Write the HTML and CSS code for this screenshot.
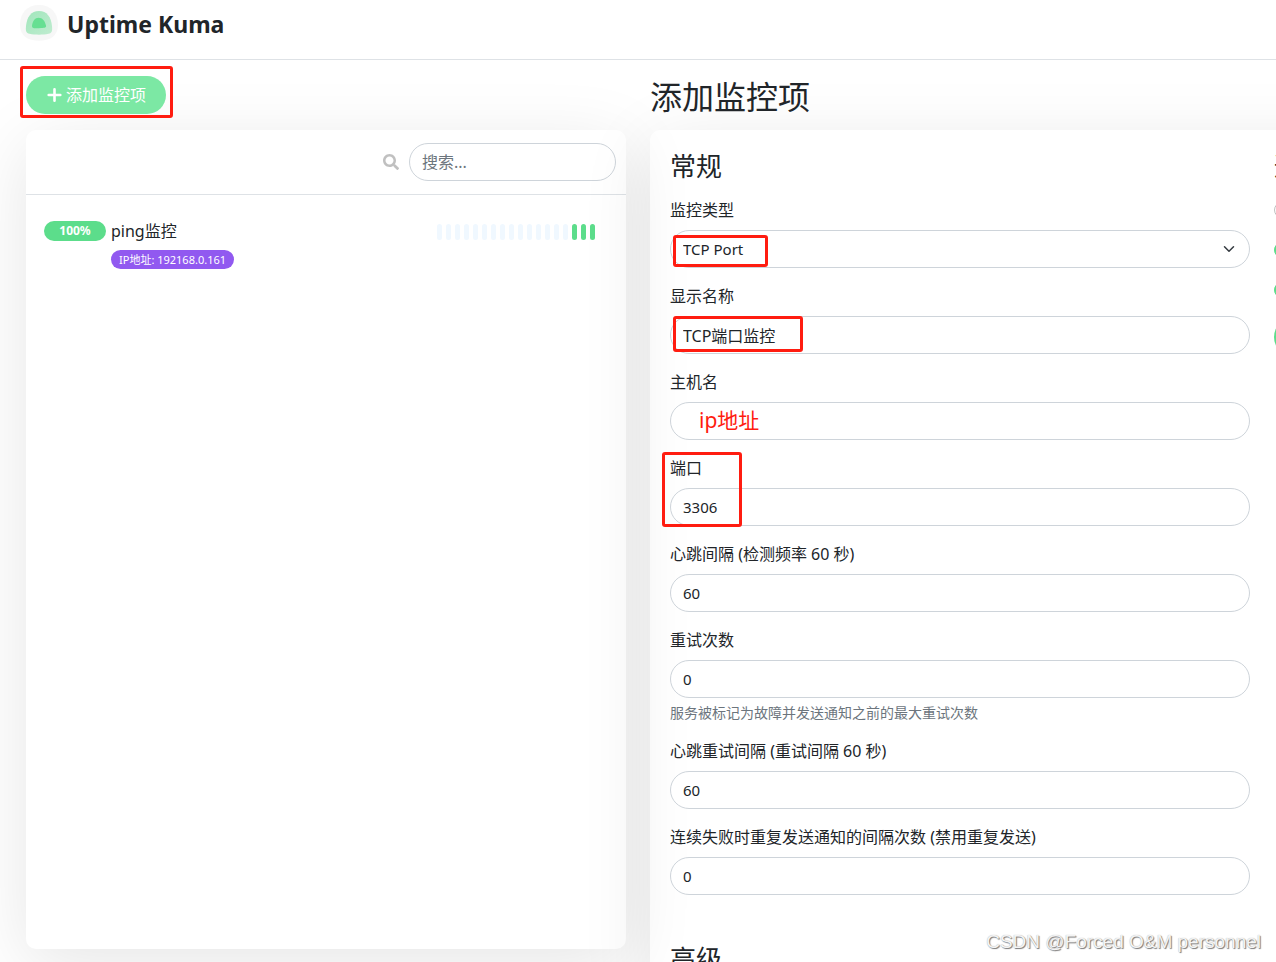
FILE: index.html
```html
<!DOCTYPE html>
<html lang="zh-CN">
<head>
<meta charset="utf-8">
<meta name="viewport" content="width=device-width, initial-scale=1">
<title>Uptime Kuma</title>
<link rel="stylesheet" href="styles.css">
</head>
<body>
<div class="app">
  <header class="topbar">
    <a class="brand" href="#">
      <svg class="logo" viewBox="0 0 40 40" aria-hidden="true">
        <defs>
          <linearGradient id="shell" x1="0" y1="0" x2="1" y2="1">
            <stop offset="0" stop-color="#a0e6bb"/>
            <stop offset="1" stop-color="#c0ecd0"/>
          </linearGradient>
        </defs>
        <path d="M20 1C32 1 39 9 39 21C39 32 31 36.700 20 36.700C9 36.700 1 32 1 21C1 9 8 1 20 1Z" fill="#f7f7f7"/>
        <path d="M20 7C28 7 32 13 33 22C33.500 27 33 29 29.500 29.800C24 31 16 31 10.500 29.800C7 29 6.500 27 7 22C8 13 12 7 20 7Z" fill="url(#shell)"/>
        <path d="M19.500 13.700C23.500 13.700 26 17 27 21.500C27.500 24 25.500 23.800 20 24.200C15 24.500 13 24.500 13 22C13.500 17 16 13.700 19.500 13.700Z" fill="#66df92"/>
      </svg>
      <span class="brand-name">Uptime Kuma</span>
    </a>
  </header>

  <main class="layout">
    <section class="sidebar">
      <div class="toolbar">
        <div class="marked">
          <button class="btn-primary" type="button">
            <svg class="plus" viewBox="0 0 16 16" aria-hidden="true"><path d="M8.500 2.200V13.800M2.700 8H14.300" stroke="currentColor" stroke-width="2.600" stroke-linecap="round"/></svg>
            添加监控项
          </button>
          <span class="mark mark-add"></span>
        </div>
      </div>
      <div class="panel list">
        <form class="list-header">
          <label class="search-label" for="search" aria-label="搜索">
            <svg class="search-icon" viewBox="0 0 512 512" aria-hidden="true"><path fill="currentColor" d="M505 442.700L405.300 343c-4.500-4.500-10.600-7-17-7H372c27.600-35.300 44-79.700 44-128C416 93.100 322.900 0 208 0S0 93.100 0 208s93.100 208 208 208c48.300 0 92.700-16.400 128-44v16.300c0 6.400 2.500 12.500 7 17l99.700 99.700c9.400 9.400 24.600 9.400 33.900 0l28.300-28.300c9.400-9.400 9.400-24.600.1-34zM208 336c-70.700 0-128-57.200-128-128 0-70.700 57.200-128 128-128 70.700 0 128 57.200 128 128 0 70.700-57.200 128-128 128z"/></svg>
          </label>
          <input class="control search" id="search" type="text" placeholder="搜索...">
        </form>
        <a class="monitor" href="#">
          <span class="uptime">100%</span>
          <span class="monitor-info">
            <span class="monitor-name">ping监控</span>
            <span class="tag">IP地址: 192168.0.161</span>
          </span>
          <span class="beats">
            <i class="beat"></i><i class="beat"></i><i class="beat"></i><i class="beat"></i><i class="beat"></i>
            <i class="beat"></i><i class="beat"></i><i class="beat"></i><i class="beat"></i><i class="beat"></i>
            <i class="beat"></i><i class="beat"></i><i class="beat"></i><i class="beat"></i><i class="beat"></i>
            <i class="beat up"></i><i class="beat up"></i><i class="beat up"></i>
          </span>
        </a>
      </div>
    </section>

    <section class="editor">
      <h1 class="page-title">添加监控项</h1>
      <form class="panel form">
        <div class="form-main">
          <h2 class="section-title">常规</h2>
          <div class="field">
            <label for="type">监控类型</label>
            <div class="marked">
              <select class="control latin" id="type"><option>TCP Port</option></select>
              <svg class="chevron" viewBox="0 0 16 16" aria-hidden="true"><path d="M2 5l6 6 6-6" fill="none" stroke="#343a40" stroke-width="2" stroke-linecap="round" stroke-linejoin="round"/></svg>
              <span class="mark mark-type"></span>
            </div>
          </div>
          <div class="field">
            <label for="name">显示名称</label>
            <div class="marked">
              <input class="control" id="name" type="text" value="TCP端口监控">
              <span class="mark mark-name"></span>
            </div>
          </div>
          <div class="field">
            <label for="host">主机名</label>
            <div class="marked">
              <input class="control" id="host" type="text">
              <span class="note">ip地址</span>
            </div>
          </div>
          <div class="field marked">
            <label for="port">端口</label>
            <input class="control latin" id="port" type="number" value="3306">
            <span class="mark mark-port"></span>
          </div>
          <div class="field">
            <label for="interval">心跳间隔 (检测频率 60 秒)</label>
            <input class="control latin" id="interval" type="number" value="60">
          </div>
          <div class="field">
            <label for="retries">重试次数</label>
            <input class="control latin" id="retries" type="number" value="0">
            <p class="help">服务被标记为故障并发送通知之前的最大重试次数</p>
          </div>
          <div class="field">
            <label for="retry-interval">心跳重试间隔 (重试间隔 60 秒)</label>
            <input class="control latin" id="retry-interval" type="number" value="60">
          </div>
          <div class="field">
            <label for="resend">连续失败时重复发送通知的间隔次数 (禁用重复发送)</label>
            <input class="control latin" id="resend" type="number" value="0">
          </div>
          <h2 class="section-title section-next">高级</h2>
        </div>
        <div class="form-side">
          <h2 class="section-title">通知</h2>
          <div class="switches">
            <input class="switch" type="checkbox" aria-label="通知">
            <input class="switch" type="checkbox" aria-label="通知" checked>
            <input class="switch" type="checkbox" aria-label="通知" checked>
          </div>
          <button class="btn-primary btn-solid" type="button" aria-label="通知"></button>
        </div>
      </form>
    </section>
  </main>
  <div class="watermark">CSDN @Forced O&amp;M personnel</div>
</div>
</body>
</html>
```
FILE: styles.css
```css
* { box-sizing: border-box; }

body {
  margin: 0;
  background: #fff;
  color: #212529;
  font-family: "Noto Sans", "Noto Sans CJK SC", sans-serif;
  font-size: 16px;
  line-height: 24px;
}

h1, h2, p { margin: 0; font-weight: 400; }
a { color: inherit; text-decoration: none; }
button, input, select { font: inherit; color: inherit; }

.app {
  position: relative;
  height: 100vh;
  overflow: hidden;
}

.topbar {
  height: 60px;
  padding: 4px 19px;
  border-bottom: 1px solid #dee2e6;
}
.brand { display: inline-flex; align-items: center; gap: 8px; }
.logo { width: 40px; height: 40px; }
.brand-name { font-size: 23px; font-weight: 700; }

.layout {
  display: grid;
  grid-template-columns: 600fr 626fr;
  gap: 24px;
  padding: 16px 0 0 26px;
}
.sidebar, .editor { min-width: 0; }

.toolbar { display: flex; height: 54px; }
.marked { position: relative; }

.btn-primary {
  display: flex;
  align-items: center;
  gap: 4px;
  height: 38px;
  padding: 0 20px;
  border: 0;
  border-radius: 19px;
  background: #7ce8a4;
  color: #fff;
}
.plus { width: 16px; height: 16px; }

/* Panels stay transparent so that neighbouring shadows blend across them. */
.panel {
  border-radius: 10px;
  box-shadow: 0 15px 70px rgba(0, 0, 0, .1);
}

.list { height: calc(100vh - 143px); }
.list-header {
  display: flex;
  align-items: center;
  justify-content: flex-end;
  gap: 10px;
  height: 65px;
  padding: 0 10px;
  border-bottom: 1px solid #dee2e6;
}
.search-label { display: flex; color: #c0c0c0; }
.search-icon { width: 16px; height: 16px; }

.control {
  display: block;
  width: 100%;
  height: 38px;
  padding: 0 12px;
  border: 1px solid #ced4da;
  border-radius: 19px;
  background: #fff;
  appearance: none;
  outline: 0;
}
.control::placeholder { color: #6c757d; opacity: 1; }
.control[type="number"] { appearance: textfield; }
.latin { font-size: 15px; }
.search { width: 207px; }

.monitor {
  display: flex;
  align-items: flex-start;
  gap: 5px;
  padding: 24px 31px 0 18px;
}
.uptime {
  width: 62px;
  margin-top: 2px;
  border-radius: 10px;
  background: #5cdd8b;
  color: #fff;
  font-size: 12px;
  font-weight: 700;
  line-height: 20px;
  text-align: center;
}
.monitor-info {
  display: flex;
  flex: 1;
  flex-direction: column;
  align-items: flex-start;
  gap: 7px;
}
.tag {
  padding: 0 8px;
  border-radius: 10px;
  background: #9159f0;
  color: #fff;
  font-size: 11px;
  line-height: 19px;
}
.beats { display: flex; gap: 4px; padding-top: 5px; }
.beat {
  width: 5px;
  height: 16px;
  border-radius: 3px;
  background: #f0f8ff;
}
.beat.up { background: #5cdd8b; }

.page-title {
  height: 54px;
  font-size: 32px;
  line-height: 42px;
}
.form {
  display: flex;
  gap: 24px;
  margin-right: -200px;
  padding: 20px 0 20px 20px;
}
.form-main { flex: 0 0 calc(100% - 226px); }
.form-side { flex: 1; }
.section-title {
  font-size: 26px;
  line-height: 32px;
}
.section-next { margin-top: 48px; }
.field { margin-top: 16px; }
.field label { display: block; margin-bottom: 8px; }
.help {
  margin-top: 4px;
  color: #6c757d;
  font-size: 14px;
  line-height: 21px;
}
.chevron {
  position: absolute;
  top: 13px;
  right: 15px;
  width: 12px;
  height: 12px;
  pointer-events: none;
}

.switches {
  display: grid;
  gap: 24px;
  margin: 20px 0;
}
.switch {
  width: 32px;
  height: 16px;
  margin: 0;
  border: 1px solid #bfbfbf;
  border-radius: 8px;
  background: #fff;
  appearance: none;
}
.switch:checked { border-color: #5cdd8b; background: #5cdd8b; }
.btn-solid { background: #5cdd8b; }

/* Annotations drawn over the form */
.mark {
  position: absolute;
  border: 3px solid #ff1c10;
  border-radius: 3px;
  pointer-events: none;
}
.mark-add { inset: -10px -7px auto -6px; height: 52px; }
.mark-type { top: 5px; left: 3px; width: 95px; height: 32px; }
.mark-name { top: 0; left: 3px; width: 130px; height: 36px; }
.mark-port { top: -4px; left: -8px; width: 80px; height: 75px; }
.note {
  position: absolute;
  top: 6px;
  left: 29px;
  color: #ff1c10;
  font-size: 21px;
  pointer-events: none;
}
.watermark {
  position: absolute;
  right: 15px;
  bottom: 8px;
  color: #f4f4f4;
  font-family: "Liberation Sans", Arial, sans-serif;
  font-size: 19px;
  text-shadow: 1px 1px 1px #777, 0 0 1px #aaa;
}
```
